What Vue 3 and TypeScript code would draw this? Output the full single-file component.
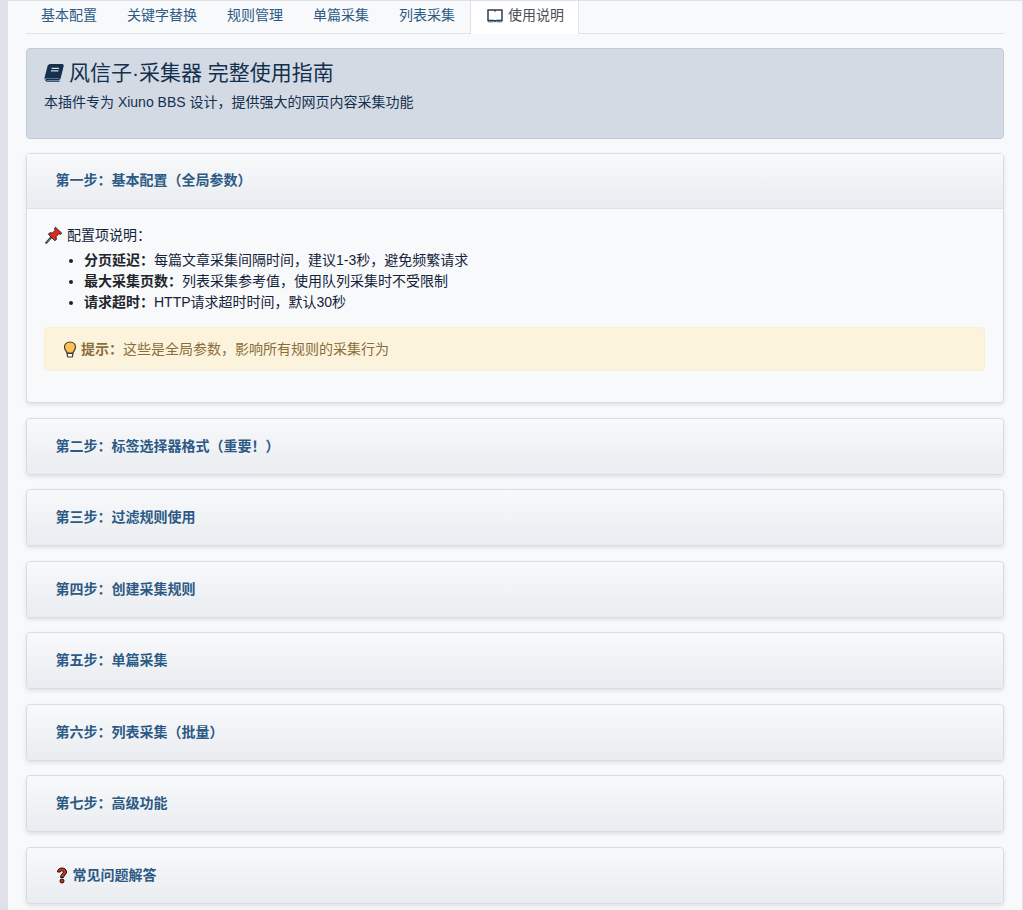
<script setup lang="ts">
const tabs: string[] = ['基本配置', '关键字替换', '规则管理', '单篇采集', '列表采集']
const steps: string[] = ['第二步：标签选择器格式（重要！）', '第三步：过滤规则使用', '第四步：创建采集规则', '第五步：单篇采集', '第六步：列表采集（批量）', '第七步：高级功能']
</script>

<template>
  <div class="frame">
    <main class="panel">
      <nav class="tabs">
        <a v-for="t in tabs" :key="t" class="tab">{{ t }}</a>
        <a class="tab active">
          <svg class="tab-icon" width="16" height="14" viewBox="0 0 16 14">
            <path d="M1 1h6c.5 0 .8.2 1 .6.2-.4.5-.6 1-.6h6v10.500H9.500c-.7 0-1.200.3-1.500.7-.3-.4-.8-.7-1.500-.7H1z" fill="#fff" stroke="#2c3e50" stroke-width="1.500"/>
            <path d="M1 12.800h5.500M9.500 12.800H15" stroke="#1f6fb0" stroke-width="1"/>
          </svg>
          使用说明
        </a>
      </nav>

      <section class="banner">
        <h4 class="banner-title">
          <svg class="book" width="20" height="18" viewBox="0 0 20 18">
            <path d="M5.200 .6h13c.7 0 1.100.6.9 1.300l-3 12.200c-.2.7-.7 1.200-1.400 1.200H3.200c-1.200 0-1.600 1-1 1.500.2.200.5.300.9.300h12.500" fill="none" stroke="#14304f" stroke-width="1.200"/>
            <path d="M5 .8h13.500c.5 0 .7.400.6.900l-3 12c-.1.500-.5.900-1 .900H2.500c-.9 0-1.600.5-1.800 1.200C.4 15 .5 13.700 .9 12.300L3.500 2.200C3.800 1.200 4.300.8 5 .8z" fill="#14304f"/>
            <path d="M7.500 4.300h7.500M6.900 6.800h7.500" stroke="#d3dae4" stroke-width="1.200"/>
          </svg>
          风信子·采集器 完整使用指南
        </h4>
        <p class="banner-text">本插件专为 Xiuno BBS 设计，提供强大的网页内容采集功能</p>
      </section>

      <section class="card first">
        <header class="card-head"><h5 class="card-title">第一步：基本配置（全局参数）</h5></header>
        <div class="card-body">
          <p class="lead">
            <svg class="pin" width="18" height="18" viewBox="0 0 18 18">
              <path d="M1.200 16.800 6 11.500" stroke="#222" stroke-width="2" stroke-linecap="round"/>
              <path d="M1.700 16.300 6 11.500" stroke="#aaa" stroke-width=".7"/>
              <path d="M10.500 1.300 16.700 7.200 15.500 8.300 13.700 7.700 11 10.700 11.400 13.500 9.800 14.600 3.400 8.300 4.700 6.800 7.400 7.100 10.200 4.300 9.500 2.500z" fill="#e5281b" stroke="#222" stroke-width="1" stroke-linejoin="round"/>
            </svg>
            配置项说明：
          </p>
          <ul class="list">
            <li><strong>分页延迟：</strong>每篇文章采集间隔时间，建议1-3秒，避免频繁请求</li>
            <li><strong>最大采集页数：</strong>列表采集参考值，使用队列采集时不受限制</li>
            <li><strong>请求超时：</strong>HTTP请求超时时间，默认30秒</li>
          </ul>
          <div class="tip">
            <svg class="bulb" width="14" height="17" viewBox="0 0 14 17">
              <path d="M7 1C3.800 1 1.500 3.300 1.500 6.200c0 2.600 2.200 3.800 2.500 6h6c.3-2.200 2.500-3.400 2.500-6C12.500 3.300 10.200 1 7 1z" fill="#fdc150" stroke="#3a3a3a" stroke-width="1.200"/>
              <path d="M4.300 12.500h5.400v2.200c0 .8-.7 1.300-1.400 1.300H5.700c-.7 0-1.400-.5-1.400-1.300z" fill="#fff" stroke="#3a3a3a" stroke-width="1.200"/>
            </svg>
            <strong>提示：</strong>这些是全局参数，影响所有规则的采集行为
          </div>
        </div>
      </section>

      <section v-for="s in steps" :key="s" class="card">
        <header class="card-head closed"><h5 class="card-title">{{ s }}</h5></header>
      </section>

      <section class="card">
        <header class="card-head closed">
          <h5 class="card-title">
            <svg class="qmark" width="12" height="17" viewBox="0 0 12 17">
              <path d="M1.500 5C1.500 2.500 3.500 1 6 1s4.500 1.500 4.500 4c0 2.800-3 3.200-3 5.500h-3c0-3.500 3-3.800 3-5.500 0-.8-.6-1.300-1.500-1.300S4.500 4.300 4.500 5z" fill="#d9301c" stroke="#111" stroke-width="1"/>
              <circle cx="6" cy="14" r="2" fill="#d9301c" stroke="#111" stroke-width="1"/>
            </svg>
            常见问题解答
          </h5>
        </header>
      </section>
    </main>
  </div>
</template>

<style>
html, body {
  margin: 0;
  background: #dee2e8;
}
</style>

<style scoped>
.frame {
  padding: 1px 1px 0 8px;
  background: #dee2e8;
  height: 909px;
  overflow: hidden;
  font-family: "Liberation Sans", "Noto Sans CJK SC", sans-serif;
  font-size: 14px;
  line-height: 21px;
  color: #2c3e50;
}
.panel {
  background: #f8f9fb;
  height: 100%;
  padding: 0 18px;
  overflow: hidden;
}
.tabs {
  display: flex;
  height: 32px;
  border-bottom: 1px solid #dee2e6;
}
.tab {
  padding: 4px 15px 0;
  height: 33px;
  box-sizing: border-box;
  color: #2c5a85;
}
.tab.active {
  background: #fff;
  color: #495057;
  border-right: 1px solid #dee2e6;
  border-left: 1px solid #dee2e6;
  padding: 4px 14px 0 16px;
  display: flex;
  align-items: flex-start;
  gap: 5px;
  width: 109px;
}
.tab-icon { margin-top: 4px; flex: none; }
.banner {
  margin-top: 14px;
  height: 91px;
  box-sizing: border-box;
  border: 1px solid #c0cbd9;
  border-radius: 4px;
  background: #d3dae4;
  padding: 12px 17px;
  color: #14304f;
}
.banner-title {
  margin: 0;
  font-size: 21px;
  font-weight: 400;
  line-height: 24px;
  display: flex;
  align-items: center;
  gap: 5px;
}
.book { flex: none; }
.banner-text {
  margin: 7px 0 0;
  line-height: 20px;
  color: #14304f;
}
.card {
  margin-top: 14.5px;
  border: 1px solid #d8dce2;
  border-radius: 4px;
  background: #f8f9fb;
  box-shadow: 0 2px 4px rgba(0, 0, 0, .1);
}
.card.first { margin-top: 14px; }
.card-head {
  height: 55px;
  box-sizing: border-box;
  padding: 0 28.5px 1px;
  display: flex;
  align-items: center;
  border-bottom: 1px solid #dee2e6;
  background: linear-gradient(to bottom, #f8f9fb, #e9ecf0);
}
.card-head.closed { border-bottom: 0; border-radius: 4px; padding: .5px 28.5px 0; }
.card-title {
  margin: 0;
  font-size: 14px;
  font-weight: 700;
  color: #2c5a85;
  display: flex;
  align-items: center;
  gap: 5px;
}
.card-body {
  padding: 15.500px 18px 16px 17px;
  height: 193.2px;
  box-sizing: border-box;
  color: #14233a;
}
.lead {
  margin: 0 0 5px;
  display: flex;
  align-items: center;
  gap: 4px;
  line-height: 20px;
  padding-left: 1px;
}
.list {
  margin: 0 0 14px;
  padding-left: 40px;
}
.list li { line-height: 21px; }
.list strong { color: #212529; }
.tip {
  height: 44px;
  box-sizing: border-box;
  border: 1px solid #fbeed2;
  border-radius: 4px;
  background: #fcf3dc;
  color: #8a6d3b;
  padding: 1px 18px 0;
  display: flex;
  align-items: center;
}
.bulb { margin-right: 4px; flex: none; }
</style>
